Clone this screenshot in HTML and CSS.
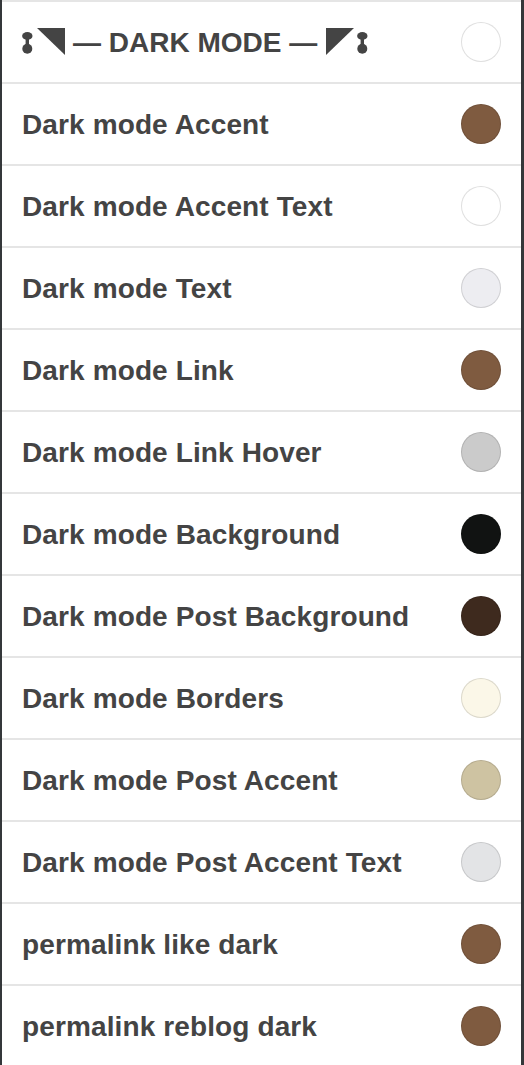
FILE: index.html
```html
<!DOCTYPE html>
<html>
<head>
<meta charset="utf-8">
<link rel="stylesheet" href="styles.css">
</head>
<body>
<div class="panel">
  <div class="row">
    <div class="title">
      <svg class="drop" viewBox="0 0 11 22" width="11" height="22"><ellipse cx="5.3" cy="3.9" rx="5.2" ry="3.9"/><rect x="3.6" y="6" width="3.4" height="6"/><circle cx="5.3" cy="16.8" r="5"/></svg>
      <svg class="tri tri-l" viewBox="0 0 28 27" width="28" height="27"><polygon points="0,0 28,0 28,27"/></svg>
      <span class="title-text">— DARK MODE —</span>
      <svg class="tri tri-r" viewBox="0 0 28 27" width="28" height="27"><polygon points="0,0 28,0 0,27"/></svg>
      <svg class="drop drop-r" viewBox="0 0 11 22" width="11" height="22"><ellipse cx="5.3" cy="3.9" rx="5.2" ry="3.9"/><rect x="3.6" y="6" width="3.4" height="6"/><circle cx="5.3" cy="16.8" r="5"/></svg>
    </div>
    <span class="swatch" style="background:#ffffff"></span>
  </div>
  <div class="row"><span class="label">Dark mode Accent</span><span class="swatch" style="background:#7f5b40"></span></div>
  <div class="row"><span class="label">Dark mode Accent Text</span><span class="swatch" style="background:#ffffff"></span></div>
  <div class="row"><span class="label">Dark mode Text</span><span class="swatch" style="background:#ededf1"></span></div>
  <div class="row"><span class="label">Dark mode Link</span><span class="swatch" style="background:#7f5b40"></span></div>
  <div class="row"><span class="label">Dark mode Link Hover</span><span class="swatch" style="background:#cbcbcb"></span></div>
  <div class="row"><span class="label">Dark mode Background</span><span class="swatch" style="background:#111312"></span></div>
  <div class="row"><span class="label">Dark mode Post Background</span><span class="swatch" style="background:#3e2a1e"></span></div>
  <div class="row"><span class="label">Dark mode Borders</span><span class="swatch" style="background:#fbf7e8"></span></div>
  <div class="row"><span class="label">Dark mode Post Accent</span><span class="swatch" style="background:#cec3a2"></span></div>
  <div class="row"><span class="label">Dark mode Post Accent Text</span><span class="swatch" style="background:#e3e4e6"></span></div>
  <div class="row"><span class="label">permalink like dark</span><span class="swatch" style="background:#7f5b40"></span></div>
  <div class="row"><span class="label">permalink reblog dark</span><span class="swatch" style="background:#7f5b40"></span></div>
</div>
</body>
</html>
```
FILE: styles.css
```css
html, body {
  margin: 0;
  padding: 0;
  background: #ffffff;
}
body {
  font-family: "Liberation Sans", Arial, sans-serif;
  color: #444444;
  overflow: hidden;
}
.panel {
  width: 519px;
  border-left: 2px solid #34373a;
  border-right: 3px solid #34373a;
  background: #ffffff;
}
.row {
  display: flex;
  align-items: center;
  justify-content: space-between;
  height: 80px;
  padding: 0 20px;
  border-top: 2px solid #e5e5e5;
}
.label {
  font-size: 28px;
  font-weight: bold;
  line-height: 1;
  letter-spacing: 0.12px;
  margin-top: 2px;
}
.title {
  display: flex;
  align-items: center;
}
.title svg {
  fill: #444444;
  display: block;
}
.drop {
  margin-top: 1px;
}
.tri-l {
  margin-left: 4px;
  margin-right: 8px;
  margin-top: -1px;
}
.tri-r {
  margin-left: 9px;
  margin-right: 3px;
  margin-top: -1px;
}
.title-text {
  font-size: 28px;
  font-weight: bold;
  line-height: 1;
  margin-top: 2px;
}
.swatch {
  width: 38px;
  height: 38px;
  border-radius: 50%;
  border: 1px solid rgba(0, 0, 0, 0.12);
  flex: none;
}
```
